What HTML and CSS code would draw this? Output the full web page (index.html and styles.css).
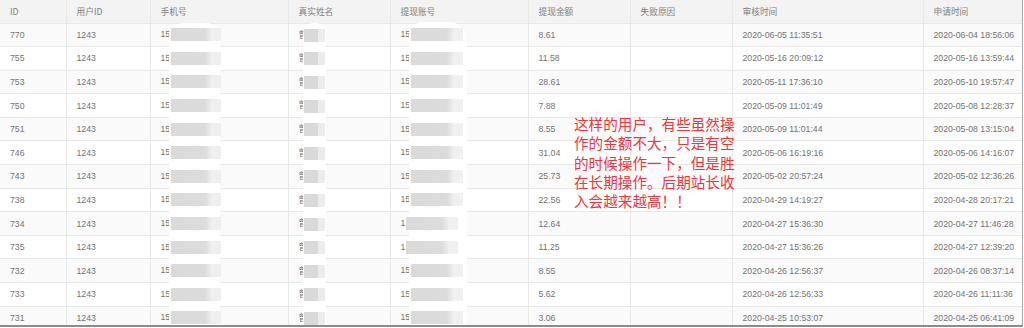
FILE: index.html
```html
<!DOCTYPE html>
<html lang="zh-CN">
<head>
<meta charset="utf-8">
<title>提现记录</title>
<link rel="stylesheet" href="styles.css">
</head>
<body>
<div class="frame">
  <table class="grid">
    <colgroup>
      <col style="width:66px"><col style="width:84px"><col style="width:138px"><col style="width:102px"><col style="width:138px"><col style="width:102px"><col style="width:102px"><col style="width:191px"><col style="width:99px">
    </colgroup>
    <thead>
      <tr><th>ID</th><th>用户ID</th><th>手机号</th><th>真实姓名</th><th>提现账号</th><th>提现金额</th><th>失败原因</th><th>审核时间</th><th>申请时间</th></tr>
    </thead>
    <tbody>
      <tr><td>770</td><td>1243</td><td>15<span class="red-a"></span></td><td>曾<span class="red-n"></span></td><td>15<span class="red-b"></span></td><td>8.61</td><td></td><td>2020-06-05 11:35:51</td><td>2020-06-04 18:56:06</td></tr>
      <tr><td>755</td><td>1243</td><td>15<span class="red-a"></span></td><td>曾<span class="red-n"></span></td><td>15<span class="red-b"></span></td><td>11.58</td><td></td><td>2020-05-16 20:09:12</td><td>2020-05-16 13:59:44</td></tr>
      <tr><td>753</td><td>1243</td><td>15<span class="red-a"></span></td><td>曾<span class="red-n"></span></td><td>15<span class="red-b"></span></td><td>28.61</td><td></td><td>2020-05-11 17:36:10</td><td>2020-05-10 19:57:47</td></tr>
      <tr><td>750</td><td>1243</td><td>15<span class="red-a"></span></td><td>曾<span class="red-n"></span></td><td>15<span class="red-b"></span></td><td>7.88</td><td></td><td>2020-05-09 11:01:49</td><td>2020-05-08 12:28:37</td></tr>
      <tr><td>751</td><td>1243</td><td>15<span class="red-a"></span></td><td>曾<span class="red-n"></span></td><td>15<span class="red-b"></span></td><td>8.55</td><td></td><td>2020-05-09 11:01:44</td><td>2020-05-08 13:15:04</td></tr>
      <tr><td>746</td><td>1243</td><td>15<span class="red-a"></span></td><td>曾<span class="red-n"></span></td><td>15<span class="red-b"></span></td><td>31.04</td><td></td><td>2020-05-06 16:19:16</td><td>2020-05-06 14:16:07</td></tr>
      <tr><td>743</td><td>1243</td><td>15<span class="red-a"></span></td><td>曾<span class="red-n"></span></td><td>15<span class="red-b"></span></td><td>25.73</td><td></td><td>2020-05-02 20:57:24</td><td>2020-05-02 12:36:26</td></tr>
      <tr><td>738</td><td>1243</td><td>15<span class="red-a"></span></td><td>曾<span class="red-n"></span></td><td>15<span class="red-b"></span></td><td>22.56</td><td></td><td>2020-04-29 14:19:27</td><td>2020-04-28 20:17:21</td></tr>
      <tr><td>734</td><td>1243</td><td>15<span class="red-a"></span></td><td>曾<span class="red-n"></span></td><td>1<span class="red-b"></span></td><td>12.64</td><td></td><td>2020-04-27 15:36:30</td><td>2020-04-27 11:46:28</td></tr>
      <tr><td>735</td><td>1243</td><td>15<span class="red-a"></span></td><td>曾<span class="red-n"></span></td><td>1<span class="red-b"></span></td><td>11.25</td><td></td><td>2020-04-27 15:36:26</td><td>2020-04-27 12:39:20</td></tr>
      <tr><td>732</td><td>1243</td><td>15<span class="red-a"></span></td><td>曾<span class="red-n"></span></td><td>15<span class="red-b"></span></td><td>8.55</td><td></td><td>2020-04-26 12:56:37</td><td>2020-04-26 08:37:14</td></tr>
      <tr><td>733</td><td>1243</td><td>15<span class="red-a"></span></td><td>曾<span class="red-n"></span></td><td>15<span class="red-b"></span></td><td>5.62</td><td></td><td>2020-04-26 12:56:33</td><td>2020-04-26 11:11:36</td></tr>
      <tr><td>731</td><td>1243</td><td>15<span class="red-a"></span></td><td>曾<span class="red-n"></span></td><td>15<span class="red-b"></span></td><td>3.06</td><td></td><td>2020-04-25 10:53:07</td><td>2020-04-25 06:41:09</td></tr>
    </tbody>
  </table>
  <div class="mask mask-phone"></div>
  <div class="mask mask-name"></div>
  <div class="mask mask-acct"></div>
  <p class="note">这样的用户，有些虽然操作的金额不大，只是有空的时候操作一下，但是胜在长期操作。后期站长收入会越来越高！！</p>
</div>
</body>
</html>
```

FILE: styles.css
```css
html, body {
  margin: 0;
  padding: 0;
  background: #ffffff;
}

.frame {
  position: relative;
  width: 1022px;
  height: 325px;
  overflow: hidden;
  border-right: 1px solid #a8a8a8;
  border-bottom: 2px solid #8c8c8c;
  background: #ffffff;
}

.grid {
  width: 1022px;
  table-layout: fixed;
  border-collapse: collapse;
  font-family: "Liberation Sans", "Noto Sans CJK SC", sans-serif;
  font-size: 8.7px;
  color: #737373;
}

.grid th,
.grid td {
  padding: 0 0 0 10px;
  text-align: left;
  font-weight: normal;
  white-space: nowrap;
  border-left: 1px solid #e8e8e8;
  border-bottom: 1px solid #e8e8e8;
}

.grid th:first-child,
.grid td:first-child {
  border-left: none;
}

.grid thead tr {
  height: 23px;
  background: #f3f3f3;
}

.grid th {
  color: #808080;
  font-family: "Noto Sans CJK SC", "Liberation Sans", sans-serif;
}

.grid tbody tr {
  height: 23.6px;
}

.grid tbody tr:nth-child(odd) {
  background: #fafafa;
}

.red-a,
.red-b,
.red-n {
  position: relative;
  z-index: 3;
  display: inline-block;
  height: 13px;
  vertical-align: middle;
  filter: blur(0.6px);
}

.red-a {
  width: 40px;
  margin-left: 1px;
  background: linear-gradient(90deg, #dadada 0, #dcdcdc 85%, #ececec 100%);
  box-shadow: 10px 0 0 #efefef;
}

.red-b {
  width: 42px;
  margin-left: 1px;
  background: linear-gradient(90deg, #dadada 0, #dcdcdc 85%, #ececec 100%);
  box-shadow: 10px 0 0 #f0f0f0;
}

.red-n {
  width: 14px;
  margin-left: -3px;
  background: #d9d9d9;
  box-shadow: 7px 0 0 #ececec;
}

.mask {
  position: absolute;
  z-index: 2;
  background: #ffffff;
  bottom: 0;
}

.mask-phone {
  left: 169px;
  width: 51px;
  top: 23px;
  border-radius: 14px 14px 0 0;
}

.mask-name {
  left: 303px;
  width: 23px;
  top: 23px;
  border-radius: 10px 10px 0 0;
}

.mask-acct {
  left: 409px;
  width: 58px;
  top: 22px;
  border-radius: 14px 18px 0 0;
}

.note {
  position: absolute;
  z-index: 4;
  left: 574px;
  top: 114px;
  width: 164px;
  margin: 0;
  font-family: "Noto Sans CJK SC", sans-serif;
  font-size: 14.6px;
  line-height: 19.3px;
  color: #f5333a;
  word-break: break-all;
}
```
